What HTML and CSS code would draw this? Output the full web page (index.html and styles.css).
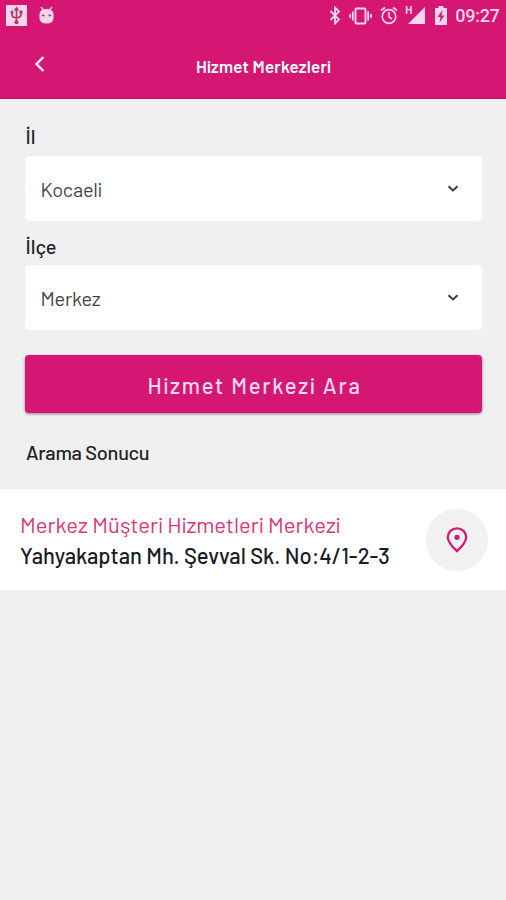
FILE: index.html
```html
<!DOCTYPE html>
<html lang="tr">
<head>
<meta charset="utf-8">
<title>Hizmet Merkezleri</title>
<link rel="stylesheet" href="styles.css">
</head>
<body>
<header class="top">
  <div class="status">
    <div class="status-left">
      <svg width="21" height="21" viewBox="0 0 21 21"><rect width="21" height="21" fill="#fbd5e9"/><g fill="none" stroke="#b5306f" stroke-width="1.7"><path d="M10.5 4v13M6 7v2.5q0 3 4.500 3.500 4.500-.5 4.500-3.500V7"/></g><g fill="#b5306f"><path d="M10.500 1.500l2.800 4H7.700z"/><circle cx="6" cy="7" r="1.500"/><path d="M13.500 5.500h3v3h-3z"/><circle cx="10.500" cy="17.300" r="2"/></g></svg>
      <svg class="droid" width="15" height="19" viewBox="0 0 15 19"><path d="M2 1l2.500 3M13 1l-2.500 3" stroke="#fbd5e9" stroke-width="1.300"/><path d="M.5 8Q1 3 7.500 3T14.500 8v4.500Q14 17.500 7.500 17.500T.5 12.500z" fill="#fbd5e9"/><path d="M3 9.500h2.500M9.500 9.500H12" stroke="#d51773" stroke-width="1.500"/></svg>
    </div>
    <div class="status-right">
      <svg width="12" height="19" viewBox="0 0 12 19"><path d="M1.500 5l8.500 8.500L6 17.500v-16l4 4L1.500 14" fill="none" stroke="#fbd5e9" stroke-width="1.800"/></svg>
      <svg class="vibrate" width="23" height="18" viewBox="0 0 23 18"><g fill="none" stroke="#fbd5e9"><rect x="6.500" y="1.500" width="10" height="15" rx="1" stroke-width="2"/><path d="M3.800 4.500v9M19.200 4.500v9" stroke-width="1.800"/><path d="M1 7v4M22 7v4" stroke-width="1.600"/></g></svg>
      <svg class="alarm" width="18" height="19" viewBox="0 0 18 19"><g fill="none" stroke="#fbd5e9" stroke-width="1.700"><circle cx="9" cy="10.500" r="6.800"/><path d="M1 4.500L5 1.500M17 4.500L13 1.500M9 6v5l3 2"/></g></svg>
      <span class="network">H</span>
      <svg width="17" height="17" viewBox="0 0 17 17"><path d="M17 0v17H0z" fill="#fbd5e9"/></svg>
      <svg class="battery" width="12" height="19" viewBox="0 0 12 19"><path d="M3.500 0h5v2H12v17H0V2h3.500z" fill="#fbd5e9"/><path d="M7.500 4L2.500 11h3L4.500 16.500l5-7h-3z" fill="#d51773"/></svg>
      <span class="clock">09:27</span>
    </div>
  </div>
  <div class="bar">
    <svg class="back" width="12" height="18" viewBox="0 0 12 18"><path d="M9.500 2L2.500 9l7 7" fill="none" stroke="#fff" stroke-width="2.300"/></svg>
    <h1 class="title">Hizmet Merkezleri</h1>
  </div>
</header>
<main>
  <section class="form">
    <label class="label">İl</label>
    <div class="select"><span>Kocaeli</span><svg width="12" height="8" viewBox="0 0 12 8"><path d="M1.500 1.300L6 5.500l4.500-4.200" fill="none" stroke="#3c3c3c" stroke-width="2"/></svg></div>
    <label class="label second">İlçe</label>
    <div class="select"><span>Merkez</span><svg width="12" height="8" viewBox="0 0 12 8"><path d="M1.500 1.300L6 5.500l4.500-4.200" fill="none" stroke="#3c3c3c" stroke-width="2"/></svg></div>
    <button class="search">Hizmet Merkezi Ara</button>
    <h2 class="result-title">Arama Sonucu</h2>
  </section>
  <article class="result">
    <div class="info">
      <div class="name">Merkez Müşteri Hizmetleri Merkezi</div>
      <div class="address">Yahyakaptan Mh. Şevval Sk. No:4/1-2-3</div>
    </div>
    <div class="pin"><svg width="22" height="26" viewBox="0 0 22 26"><path d="M11 24.200Q1.800 15.500 1.800 10.200a9.200 8.900 0 0 1 18.400 0Q20.200 15.500 11 24.200z" fill="none" stroke="#d51b70" stroke-width="2.300"/><circle cx="11" cy="10.300" r="2.600" fill="#d51b70"/></svg></div>
  </article>
</main>
</body>
</html>
```

FILE: styles.css
```css
* { box-sizing: border-box; }
body { margin: 0; height: 900px; background: #f0f0f0; font-family: Barlow, Roboto, "Liberation Sans", sans-serif; color: #20232a; overflow: hidden; white-space: nowrap; }
svg { display: block; flex: none; }
.top { height: 99px; background: #d51773; border-bottom: 1px solid #c90f62; }
.status { height: 31px; display: flex; justify-content: space-between; padding: 0 6.5px 0 6px; color: #fbd5e9; }
.status-left, .status-right { display: flex; align-items: center; }
.droid { margin-left: 12px; }
.vibrate { margin-left: 8px; }
.alarm { margin-left: 8.5px; }
.network { font: 700 10px/10px Roboto, sans-serif; margin: 0 -4px 10px 7px; }
.battery { margin-left: 10px; }
.clock { font: 500 18px/32px Roboto, sans-serif; letter-spacing: -.3px; margin: 1px 0 0 8px; }
.bar { height: 67px; display: grid; grid-template-columns: 60px 1fr 60px; align-items: start; }
.back { margin: 24px 0 0 34px; }
.title { margin: 25px 0 0; padding-left: 21px; text-align: center; color: #fff; font-size: 17px; line-height: 21px; font-weight: 600; letter-spacing: .2px; }
.form { padding: 24px 24px 0 25px; height: 390px; }
.label { display: block; height: 33px; padding-left: .5px; font-size: 20px; line-height: 26px; font-weight: 500; }
.second { height: 34px; padding-top: 2px; margin-top: 10px; }
.select { height: 65px; display: flex; align-items: center; justify-content: space-between; padding: 0 23px 0 15.5px; background: #fff; border-radius: 5px; font-size: 20px; letter-spacing: -.25px; color: #444; }
.select svg { margin-bottom: 0; }
.search { display: block; width: 100%; height: 58px; margin-top: 25px; padding: 2px 0 0 2px; border: 0; border-radius: 4px; background: #d51773; box-shadow: 0 1px 3px rgba(0,0,0,.45); font: 500 22px Barlow, Roboto, sans-serif; letter-spacing: 1.8px; color: #fcd9eb; }
.result-title { margin: 26px 0 0 1px; font-size: 20px; line-height: 26px; font-weight: 500; letter-spacing: -.3px; }
.result { height: 101px; background: #fff; display: flex; align-items: center; justify-content: space-between; padding: 0 18px 0 20px; }
.info { padding-top: 1px; }
.name, .address { font-size: 22px; line-height: 31px; }
.name { color: #d93679; letter-spacing: .04px; }
.address { color: #191d25; font-weight: 500; letter-spacing: -.03px; }
.pin { width: 62px; height: 62px; border-radius: 50%; background: #f1f1f1; display: flex; align-items: center; justify-content: center; }
```
